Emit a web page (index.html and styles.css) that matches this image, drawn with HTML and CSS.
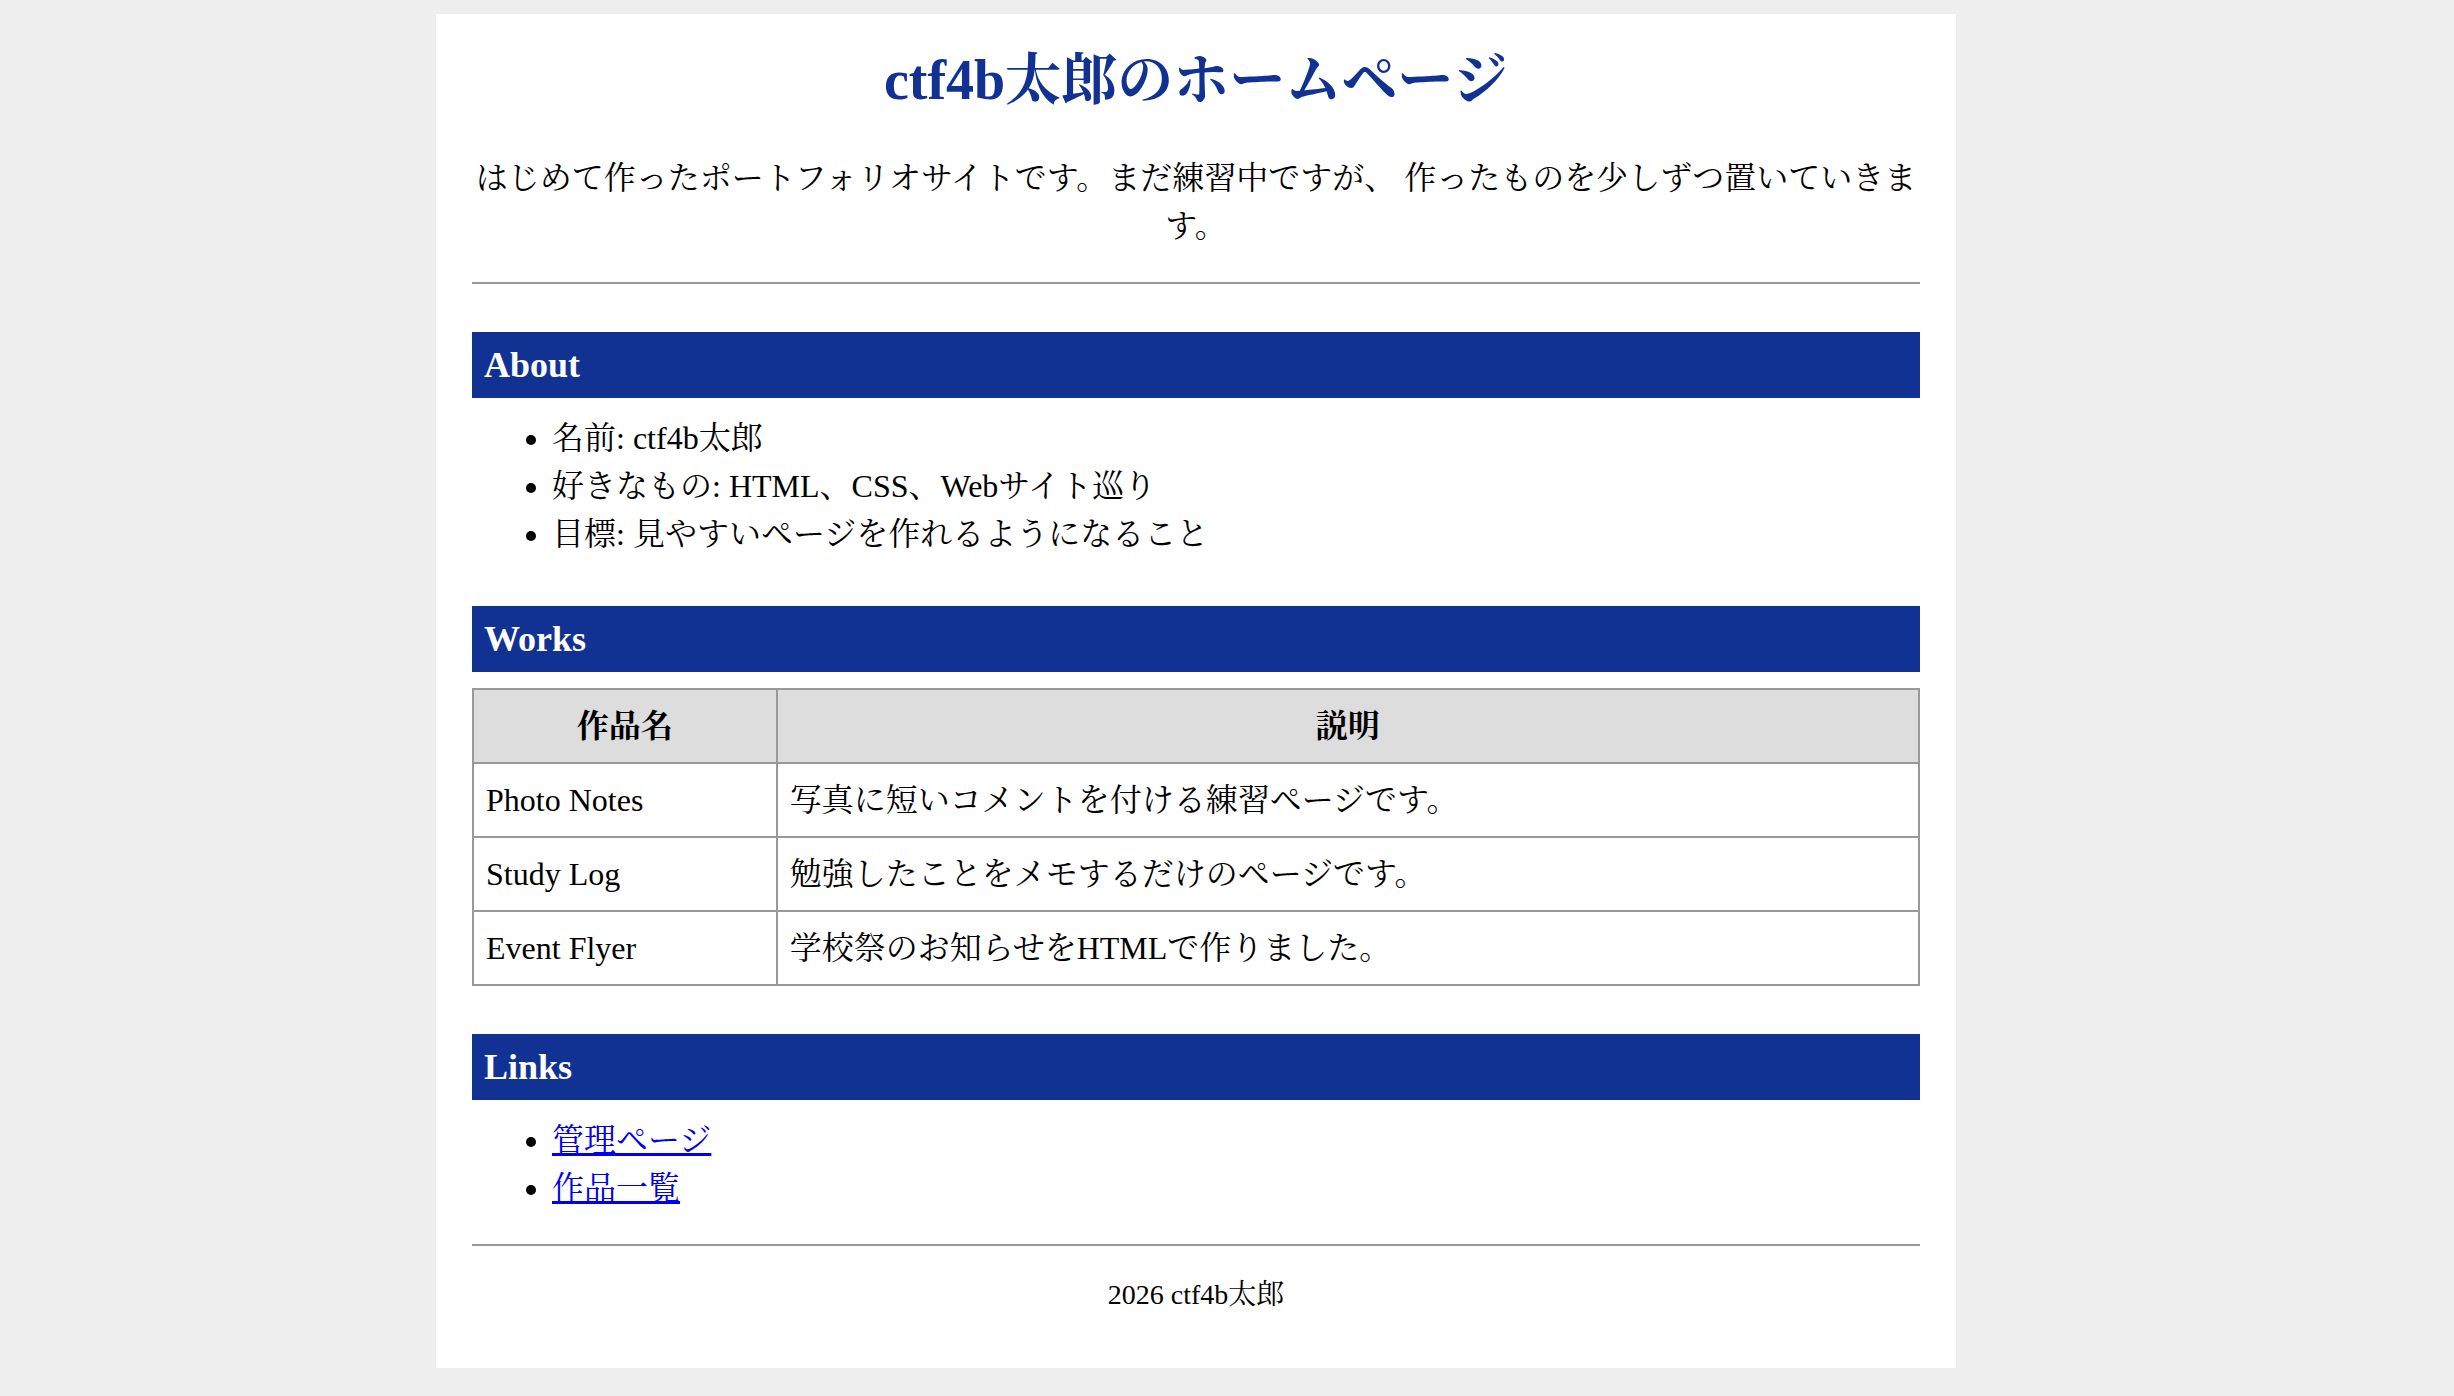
FILE: index.html
```html
<!DOCTYPE html>
<html lang="ja">
<head>
<meta charset="utf-8">
<meta name="viewport" content="width=device-width, initial-scale=1">
<title>ctf4b太郎のホームページ</title>
<link rel="stylesheet" href="styles.css">
</head>
<body>
<div class="page">
  <header class="intro">
    <h1 class="site-title">ctf4b太郎のホームページ</h1>
    <p class="lead">はじめて作ったポートフォリオサイトです。まだ練習中ですが、
      作ったものを少しずつ置いていきます。</p>
  </header>

  <main>
    <section>
      <h2 class="section-title">About</h2>
      <ul class="list">
        <li>名前: ctf4b太郎</li>
        <li>好きなもの: HTML、CSS、Webサイト巡り</li>
        <li>目標: 見やすいページを作れるようになること</li>
      </ul>
    </section>

    <section>
      <h2 class="section-title">Works</h2>
      <table class="works">
        <thead>
          <tr><th class="work-name" scope="col">作品名</th><th scope="col">説明</th></tr>
        </thead>
        <tbody>
          <tr><td>Photo Notes</td><td>写真に短いコメントを付ける練習ページです。</td></tr>
          <tr><td>Study Log</td><td>勉強したことをメモするだけのページです。</td></tr>
          <tr><td>Event Flyer</td><td>学校祭のお知らせをHTMLで作りました。</td></tr>
        </tbody>
      </table>
    </section>

    <section>
      <h2 class="section-title">Links</h2>
      <ul class="list">
        <li><a href="#admin">管理ページ</a></li>
        <li><a href="#works">作品一覧</a></li>
      </ul>
    </section>
  </main>

  <footer class="footer">
    <p class="copyright">2026 ctf4b太郎</p>
  </footer>
</div>
</body>
</html>
```
FILE: styles.css
```css
body {
  margin: 0;
  padding: 14px 62px 28px 0;
  background: #eee;
  color: #000;
  font-family: "Liberation Serif", "Noto Serif CJK JP", "Noto Sans CJK JP", serif;
  font-size: 32px;
  line-height: 1.5;
}

.page {
  box-sizing: border-box;
  max-width: 1520px;
  margin: 0 auto;
  padding: 24px 36px;
  background: #fff;
}

.intro {
  border-bottom: 2px solid #999;
  padding-bottom: 32px;
  text-align: center;
}

.site-title {
  margin: 0 0 32px;
  color: #113292;
  font-size: 56px;
}

.lead {
  margin: 0;
}

.section-title {
  margin: 48px 0 16px;
  padding: 6px 12px;
  background: #113292;
  color: #fff;
  font-size: 36px;
}

.list {
  margin: 0;
  padding-left: 80px;
}

.list a {
  color: #0000ee;
}

.works {
  width: 100%;
  border-collapse: collapse;
}

.works th,
.works td {
  padding: 12px;
  border: 2px solid #999;
  text-align: left;
}

.works th {
  background: #ddd;
  text-align: center;
}

.works .work-name {
  box-sizing: border-box;
  width: 21%;
}

.footer {
  margin-top: 32px;
  border-top: 2px solid #999;
  font-size: 28px;
  text-align: center;
}

.copyright {
  margin: 28px 0;
}
```
